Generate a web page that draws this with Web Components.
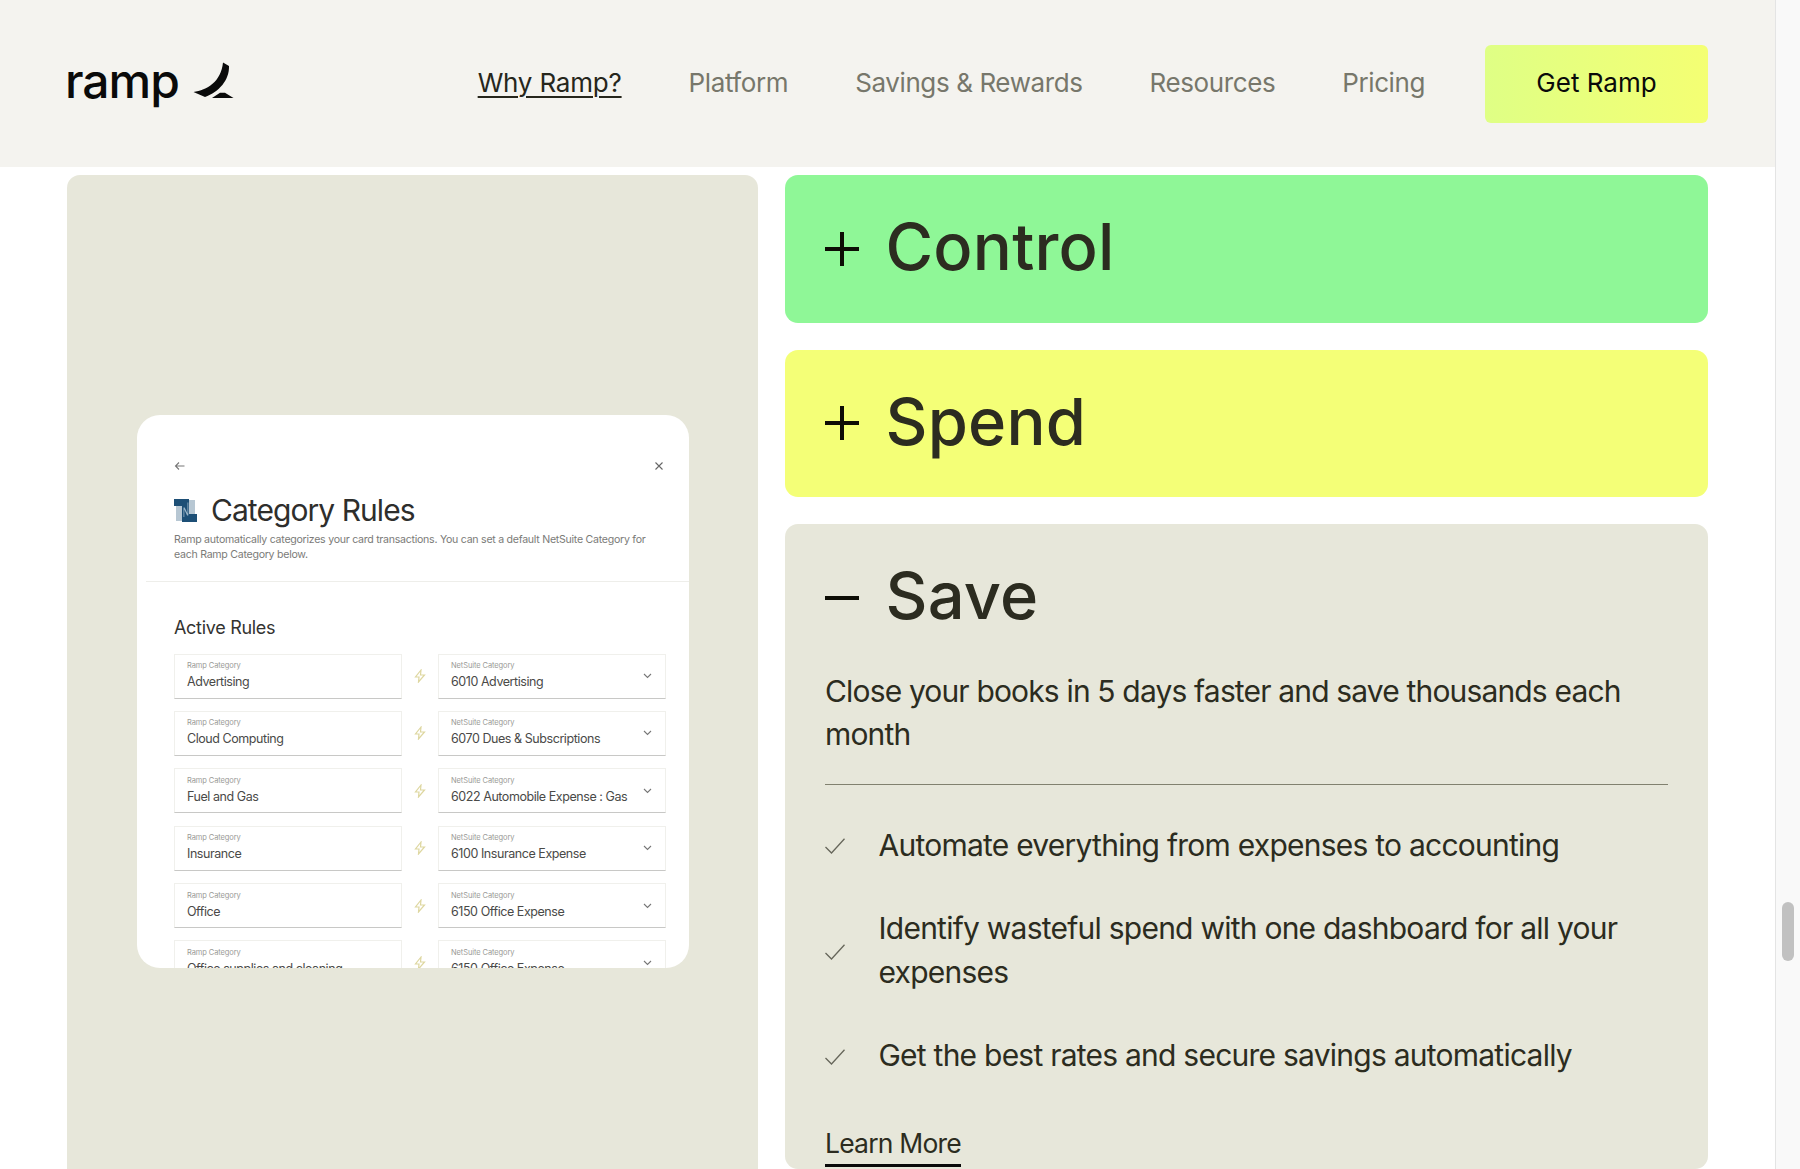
<!DOCTYPE html>
<html><head><meta charset="utf-8">
<style>
html,body{margin:0;height:1169px;overflow:hidden;background:#fff}
body{font-family:Inter,"Liberation Sans",sans-serif;color:#2c2c20}
</style></head><body>
<r-page></r-page>
<script>
const def=(n,html,init)=>customElements.define(n,class extends HTMLElement{constructor(){super();this.attachShadow({mode:'open'}).innerHTML=html;if(init)init(this)}});

def('r-nav',`<style>
:host{display:flex;align-items:center;height:167px;background:#f4f3ef;padding:0 67px 0 65px;box-sizing:border-box}
.logo{display:flex;align-items:center;gap:14px;flex:1;color:#0a0a0a;font-size:48px;font-weight:500;letter-spacing:-1px}
.logo span{padding-bottom:6px}
svg{display:block;margin-bottom:8px}
nav{display:flex;align-items:center;gap:67px;font-size:26px;color:#77776b;letter-spacing:-.4px}
a{padding-bottom:2px}
a.on{color:#26261c;letter-spacing:-.2px;text-decoration:underline;text-underline-offset:4px;text-decoration-thickness:1.500px}
.cta{margin-left:-7px;width:223px;height:78px;padding:0 0 2px;box-sizing:border-box;border-radius:6px;background:linear-gradient(90deg,#dfff85,#f4ff73);color:#0a0a0a;letter-spacing:0;display:flex;align-items:center;justify-content:center}
</style>
<div class="logo"><span>ramp</span><svg width="42" height="36" viewBox="0 0 42 36"><path fill="#0a0a0a" d="M30 .5L36 4C36.500 18 26 30 12 35L.5 30C14 28 28 20 30 .5Z"/><path fill="#0a0a0a" d="M27 30.700L32 30.700L40.500 36L19 36Z"/></svg></div>
<nav><a class="on">Why Ramp?</a><a>Platform</a><a>Savings &amp; Rewards</a><a>Resources</a><a>Pricing</a><a class="cta">Get Ramp</a></nav>`);

def('r-field',`<style>
:host{display:block;flex:none;width:227.500px;height:45px;box-sizing:border-box;background:#fff;border:1px solid #f0f0ec;border-bottom:1.500px solid #c8c8c6;padding:6.500px 12px 0;position:relative;font-family:Inter,sans-serif}
.l{font-size:7.500px;line-height:10px;color:#9a9a96;letter-spacing:-.1px;margin-top:0}
.v{font-size:12.500px;line-height:17px;color:#4a4a48;letter-spacing:-.44px;margin-top:2px;white-space:nowrap}
svg{position:absolute;right:13px;top:18.500px;display:none}
:host([sel]) svg{display:block}
</style><div class="l"><slot name="l"></slot></div><div class="v"><slot></slot></div>
<svg width="9" height="6" viewBox="0 0 9 6"><path d="M1 1l3.500 3.500L8 1" fill="none" stroke="#777" stroke-width="1.100"/></svg>`);

def('r-rule',`<style>
:host{display:flex;align-items:center;height:45px;margin-bottom:12.400px}
.b{flex:none;width:36.500px;display:flex;justify-content:center}
</style><r-field><span slot="l">Ramp Category</span><slot name="a"></slot></r-field>
<div class="b"><svg width="12" height="14" viewBox="0 0 12 14"><path d="M7 1L1.500 8H5L4.500 13L10.500 6H6.500Z" fill="none" stroke="#ded7a0" stroke-width="1.200"/></svg></div>
<r-field sel><span slot="l">NetSuite Category</span><slot name="b"></slot></r-field>`);

def('r-mock',`<style>
:host{display:block;width:552.500px;height:553px;background:#fff;border-radius:23px;overflow:hidden;box-sizing:border-box;padding:0 23.500px 0 37.500px;font-family:Inter,sans-serif}
.top{display:flex;justify-content:space-between;align-items:center;height:14px;margin-top:44px}
.top svg{display:block}
.t{display:flex;align-items:center;gap:14px;margin-top:19.500px;font-size:30px;line-height:36px;color:#2e2e2c;letter-spacing:-.95px}
p{margin:3.500px 0 0;width:490px;font-size:10.600px;line-height:15.500px;color:#7b7b78;letter-spacing:-.27px}
hr{border:0;border-top:1px solid #eeeeea;margin:18px -24px 0 -28px}
h3{margin:34px 0 14px;font-weight:400;font-size:18px;line-height:24px;color:#333331;letter-spacing:-.3px}
</style>
<div class="top"><svg width="12" height="10" viewBox="0 0 12 10"><path d="M10.500 5H1.500M5 1.500L1.500 5L5 8.500" fill="none" stroke="#777" stroke-width="1.100"/></svg><svg style="margin-right:2px" width="10" height="10" viewBox="0 0 10 10"><path d="M1.500 1.500l7 7M8.500 1.500l-7 7" fill="none" stroke="#666" stroke-width="1.100"/></svg></div>
<div class="t"><svg width="23" height="23" viewBox="0 0 23 23"><path fill="#b7c7d3" d="M2 7h6v15H2zM15 1h6v14h-6z"/><path fill="#1d4f76" d="M0 0h15v15h8v8H8V7H0z"/><path fill="#9db6c8" d="M9.500 8.500h1.200l2.800 6V3.500h.8v13h-1.200l-2.800-6v7.500h-.8z"/></svg><span>Category Rules</span></div>
<p>Ramp automatically categorizes your card transactions. You can set a default NetSuite Category for each Ramp Category below.</p>
<hr>
<h3>Active Rules</h3>
<slot></slot>`);

def('r-panel',`<style>
:host{display:block;border-radius:13px;padding:0 40px;box-sizing:border-box;background:var(--bg)}
.h{display:flex;align-items:center;height:147.500px;gap:26.500px;font-size:65px;font-weight:450;letter-spacing:.2px;color:#2c2c20}
svg{display:block;flex:none}
::slotted([slot=title]){padding-bottom:4px}
</style><div class="h"><slot name="icon"></slot><slot name="title"></slot></div><slot></slot>`);

def('r-check',`<style>
:host{display:flex;align-items:center;gap:33.500px;font-size:30px;font-weight:420;line-height:43.500px;color:#2c2c20;letter-spacing:-.76px}
svg{flex:none;display:block;margin-top:2px}
</style><svg width="20" height="16" viewBox="0 0 20 16"><path d="M.5 9l6 6L19.500 .8" fill="none" stroke="#66665a" stroke-width="1.300"/></svg><div><slot></slot></div>`);

def('r-page',`<style>
:host{display:flex;width:1800px;height:1169px;overflow:hidden}
.m{width:1775px;flex:none;display:block}
.s{flex:1;background:#f9f9f9;border-left:1px solid #e4e4e4;padding:902px 6px 0 6px;box-sizing:border-box}
.th{height:59px;border-radius:6.500px;background:#c1c1c1}
.g{display:flex;gap:27px;padding:8px 67px 0 67px;height:1002px;overflow:hidden;box-sizing:border-box}
.left{flex:none;width:691px;height:1100px;background:#e7e7da;border-radius:13px;padding:239.500px 0 0 69.500px;box-sizing:border-box}
.right{flex:none;width:923px;display:flex;flex-direction:column;gap:27px}
.bar{display:block;width:34px;height:4.500px;background:#0d0d05}
.plus{position:relative;display:block;width:34px;height:34px}
.plus::before,.plus::after{content:"";position:absolute;background:#0d0d05}
.plus::before{left:0;right:0;top:15px;height:4px}.plus::after{top:0;bottom:0;left:15px;width:4px}
.desc{font-size:30px;font-weight:420;line-height:43.500px;letter-spacing:-.84px;margin-top:-2px;padding-bottom:27.500px;border-bottom:1.500px solid #81816f}
.list{display:flex;flex-direction:column;gap:40px;margin-top:38.500px}
.lm{display:inline-block;margin-top:48px;font-size:26.500px;line-height:34px;letter-spacing:-.8px;padding-bottom:4px;border-bottom:3.500px solid #0a0a0a}
</style>
<div class="m"><r-nav></r-nav>
<div class="g"><div class="left"><r-mock>
<r-rule><span slot="a">Advertising</span><span slot="b">6010 Advertising</span></r-rule>
<r-rule><span slot="a">Cloud Computing</span><span slot="b">6070 Dues &amp; Subscriptions</span></r-rule>
<r-rule><span slot="a">Fuel and Gas</span><span slot="b">6022 Automobile Expense : Gas</span></r-rule>
<r-rule><span slot="a">Insurance</span><span slot="b">6100 Insurance Expense</span></r-rule>
<r-rule><span slot="a">Office</span><span slot="b">6150 Office Expense</span></r-rule>
<r-rule><span slot="a">Office supplies and cleaning</span><span slot="b">6150 Office Expense</span></r-rule>
</r-mock></div>
<div class="right">
<r-panel style="--bg:#8ff797"><i class="plus" slot="icon"></i><span slot="title">Control</span></r-panel>
<r-panel style="--bg:#f4ff77"><i class="plus" slot="icon"></i><span slot="title">Spend</span></r-panel>
<r-panel style="--bg:#e7e7da;height:700px"><i class="bar" slot="icon"></i><span slot="title">Save</span>
<div class="desc">Close your books in 5 days faster and save thousands each month</div>
<div class="list"><r-check>Automate everything from expenses to accounting</r-check><r-check>Identify wasteful spend with one dashboard for all your expenses</r-check><r-check>Get the best rates and secure savings automatically</r-check></div>
<a class="lm">Learn More</a>
</r-panel>
</div></div></div>
<div class="s"><div class="th"></div></div>`);
</script>
</body></html>
